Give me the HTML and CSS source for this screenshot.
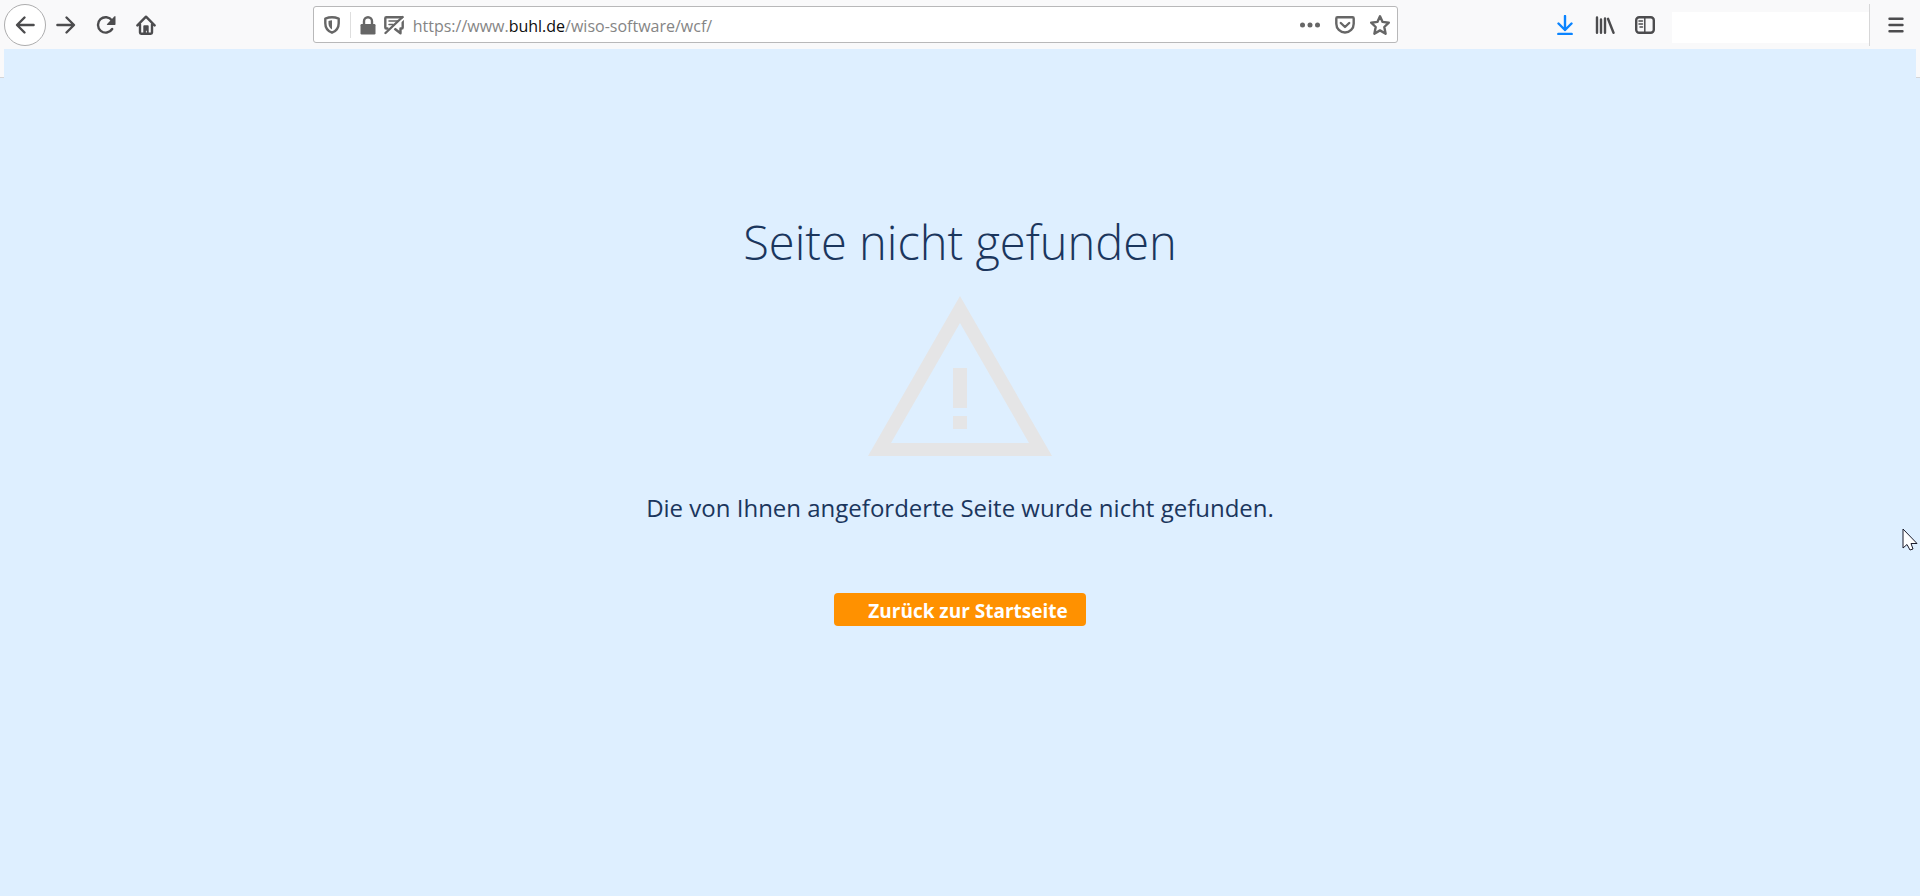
FILE: index.html
```html
<!DOCTYPE html>
<html lang="de">
<head>
<meta charset="utf-8">
<title>Seite nicht gefunden</title>
<link rel="stylesheet" href="styles.css">
</head>
<body>
<header class="toolbar">
  <button class="tool back" aria-label="Zurück"><svg class="icon" viewBox="0 0 20 20"><path class="line" d="M18.600 10H2.500M9.500 2.500L2 10l7.500 7.500"/></svg></button>
  <button class="tool" aria-label="Vor"><svg class="icon" viewBox="0 0 20 20"><path class="line" d="M1.400 10h16.100M10.500 2.500L18 10l-7.500 7.500"/></svg></button>
  <button class="tool" aria-label="Neu laden"><svg class="icon" viewBox="0 0 20 20"><path class="line" d="M16.200 14A7.700 7.700 0 1 1 16 5.500"/><path d="M18.300 1.400q1.200-.8 1.200.5v7.300q0 .8-.8.8h-7.200q-1.300 0-.4-1z"/></svg></button>
  <button class="tool" aria-label="Startseite"><svg class="icon" viewBox="0 0 20 20"><path class="line" d="M1.400 10.400L10 1.700l8.600 8.700M4 9.500v8q0 1.200 1.200 1.200h9.600q1.200 0 1.200-1.200v-8"/><path d="M7.300 18.500v-7.300q0-.9.900-.9h3.600q.9 0 .9.900v7.300h-1.900v-2.700H9.900v2.700z"/></svg></button>
  <div class="spacer"></div>
  <div class="urlbar">
    <button class="mini shield" aria-label="Schutz"><svg class="icon" viewBox="0 0 20 20"><path class="line" d="M10 2.300c2.300 0 4.600.5 6.700 1.300v4.600c0 4.400-2.200 7.700-6.700 9.500-4.500-1.800-6.700-5.100-6.700-9.500V3.600C5.400 2.800 7.700 2.300 10 2.300z"/><path d="M10 5.300v9.200C7.500 13 6.500 10.900 6.500 8.200V6q1.700-.6 3.500-.7z"/></svg></button>
    <button class="mini" aria-label="Verbindung sicher"><svg class="icon" viewBox="0 0 20 20"><path class="line" d="M6 10V6.300a4 4 0 0 1 8 0V10"/><rect x="2.500" y="9" width="15" height="10.500" rx="1.200"/></svg></button>
    <button class="mini chat" aria-label="Berechtigungen"><svg class="icon" viewBox="0 0 20 20"><path class="line" d="M3.500 13.500H2.300q-1 0-1-1V3.300q0-1 1-1h15.400q1 0 1 1v9.200q0 1-1 1h-1.200v4.800L11 14"/><path class="thin" d="M5 6h8.500M5 9.500h4"/><path class="gap" d="M1.800 20L20 3.500"/><path class="line" d="M1.500 18L18.500 2"/></svg></button>
    <div class="address" role="textbox" contenteditable="true" spellcheck="false" aria-label="Adresse">https://www.<span class="domain">buhl.de</span>/wiso-software/wcf/</div>
    <button class="action" aria-label="Aktionen"><svg class="icon" viewBox="0 0 20 20"><circle cx="2.500" cy="10" r="2.500"/><circle cx="10" cy="10" r="2.500"/><circle cx="17.500" cy="10" r="2.500"/></svg></button>
    <button class="action" aria-label="Pocket"><svg class="icon" viewBox="0 0 20 20"><path class="line" d="M2.500 2.300h15q1.200 0 1.200 1.200v5.300a8.700 8.700 0 0 1-17.400 0V3.500q0-1.200 1.200-1.200z"/><path class="line" d="M5.800 8L10 12l4.200-4"/></svg></button>
    <button class="action" aria-label="Lesezeichen"><svg class="icon" viewBox="0 0 20 20"><path class="line" d="M10 1.300l2.600 5.600 6.200.8-4.500 4.300 1.300 6.700L10 15.400l-5.600 3.300L5.700 12 1.200 7.700l6.200-.8z"/></svg></button>
  </div>
  <div class="spacer"></div>
  <button class="tool download" aria-label="Downloads"><svg class="icon" viewBox="0 0 20 20"><path class="line" d="M10 1v14M3.500 8.500L10 15l6.500-6.500M3.300 19h13.400"/></svg></button>
  <button class="tool" aria-label="Bibliothek"><svg class="icon" viewBox="0 0 20 20"><path class="line" d="M2 2.500v15.300M6 4.500v13.300M10 3.500v14.300M13 3.800l5.500 14"/></svg></button>
  <button class="tool" aria-label="Seitenleiste"><svg class="icon" viewBox="0 0 20 20"><rect class="line" x="1.200" y="2.200" width="17.600" height="15.600" rx="3"/><path class="thin" d="M9.800 2v16M4 6h3.500M4 9h3.500M5 12h2.500"/></svg></button>
  <input class="search" type="search" aria-label="Suche">
  <button class="tool menu" aria-label="Menü"><svg class="icon" viewBox="0 0 20 20"><path class="line" d="M3.500 3.800h13M3.500 10h13M3.500 16.200h13"/></svg></button>
</header>
<div class="edges"><span class="edge"></span><span class="edge"></span></div>
<main class="page">
  <h1 class="title">Seite nicht gefunden</h1>
  <svg class="warning" viewBox="0 0 184 160" aria-hidden="true"><path fill-rule="evenodd" d="M92 0l92 160H0zM92 27L23 147h138z"/><path d="M85 72h14v40H85zM85 120h14v13H85z"/></svg>
  <p class="message">Die von Ihnen angeforderte Seite wurde nicht gefunden.</p>
  <a class="home-link" href="#">Zurück zur Startseite</a>
</main>
<svg class="pointer" viewBox="0 0 16 24" aria-hidden="true"><path d="M1 1v19l4-3.500 3 5.500 3-1-2-5.500h6z"/></svg>
</body>
</html>
```
FILE: styles.css
```css
* { box-sizing: border-box; }

body {
  margin: 0;
  min-height: 100vh;
  background: #deefff;
  color: #1b365d;
  font-family: "Open Sans", "Noto Sans", sans-serif;
}

button {
  display: flex;
  align-items: center;
  justify-content: center;
  flex: none;
  padding: 0;
  border: 0;
  background: none;
  color: inherit;
}

.icon { width: 20px; height: 20px; fill: currentColor; }
.line, .thin, .gap { fill: none; stroke: currentColor; stroke-width: 2.4; stroke-linecap: round; stroke-linejoin: round; }
.thin { stroke-width: 1.5; }
.gap { stroke: #fff; stroke-width: 2; }

.toolbar {
  display: flex;
  align-items: center;
  height: 49px;
  padding: 0 4px;
  background: #f9f9fa;
  color: #4c4c4e;
}
.tool { width: 40px; height: 40px; }
.back { width: 42px; height: 42px; border: 1px solid #adadae; border-radius: 50%; background: #fff; }
.spacer { flex: 147 1 0; }
.download { color: #0a84ff; }
.search { width: 197px; height: 31px; margin: 5px 0 0 7px; padding: 0 8px; border: 0; background: #fff; }
.menu { width: 47px; height: 42px; padding-left: 6px; border-left: 1px solid #d7d7d8; }

.urlbar {
  display: flex;
  align-items: center;
  flex: 1086 1 0;
  height: 37px;
  border: 1px solid #b8b8b9;
  border-radius: 3px;
  background: #fff;
  color: #666;
}
.mini { width: 26px; height: 26px; }
.shield { width: 37px; margin-right: 4px; border-right: 1px solid #dedede; }
.address { flex: 1; padding: 2px 0 0 6px; color: #858585; font-size: 16px; line-height: 24px; white-space: nowrap; outline: 0; }
.domain { color: #0c0c0d; }
.action { width: 35px; height: 30px; }

.edges { display: flex; justify-content: space-between; }
.edge { width: 4px; height: 29px; border-bottom: 1px solid #d4d4d6; background: #f9f9fa; }

.page { display: flex; flex-direction: column; align-items: center; padding: 128px 16px 0; }
.title { margin: 0; font-size: 47px; line-height: 72px; font-weight: 300; }
.warning { width: 184px; height: 160px; margin-top: 18px; fill: #e5e5e6; }
.message { margin: 34px 0 0; font-size: 24px; line-height: 36px; }
.home-link {
  margin-top: 67px;
  padding: 3px 18px 0 34px;
  border-radius: 4px;
  background: #ff9100;
  color: #fff;
  font-size: 19px;
  line-height: 30px;
  font-weight: 700;
  text-decoration: none;
}

.pointer { position: absolute; top: 528px; right: 2px; width: 16px; height: 24px; fill: #fff; stroke: #1b1b2b; }
```
